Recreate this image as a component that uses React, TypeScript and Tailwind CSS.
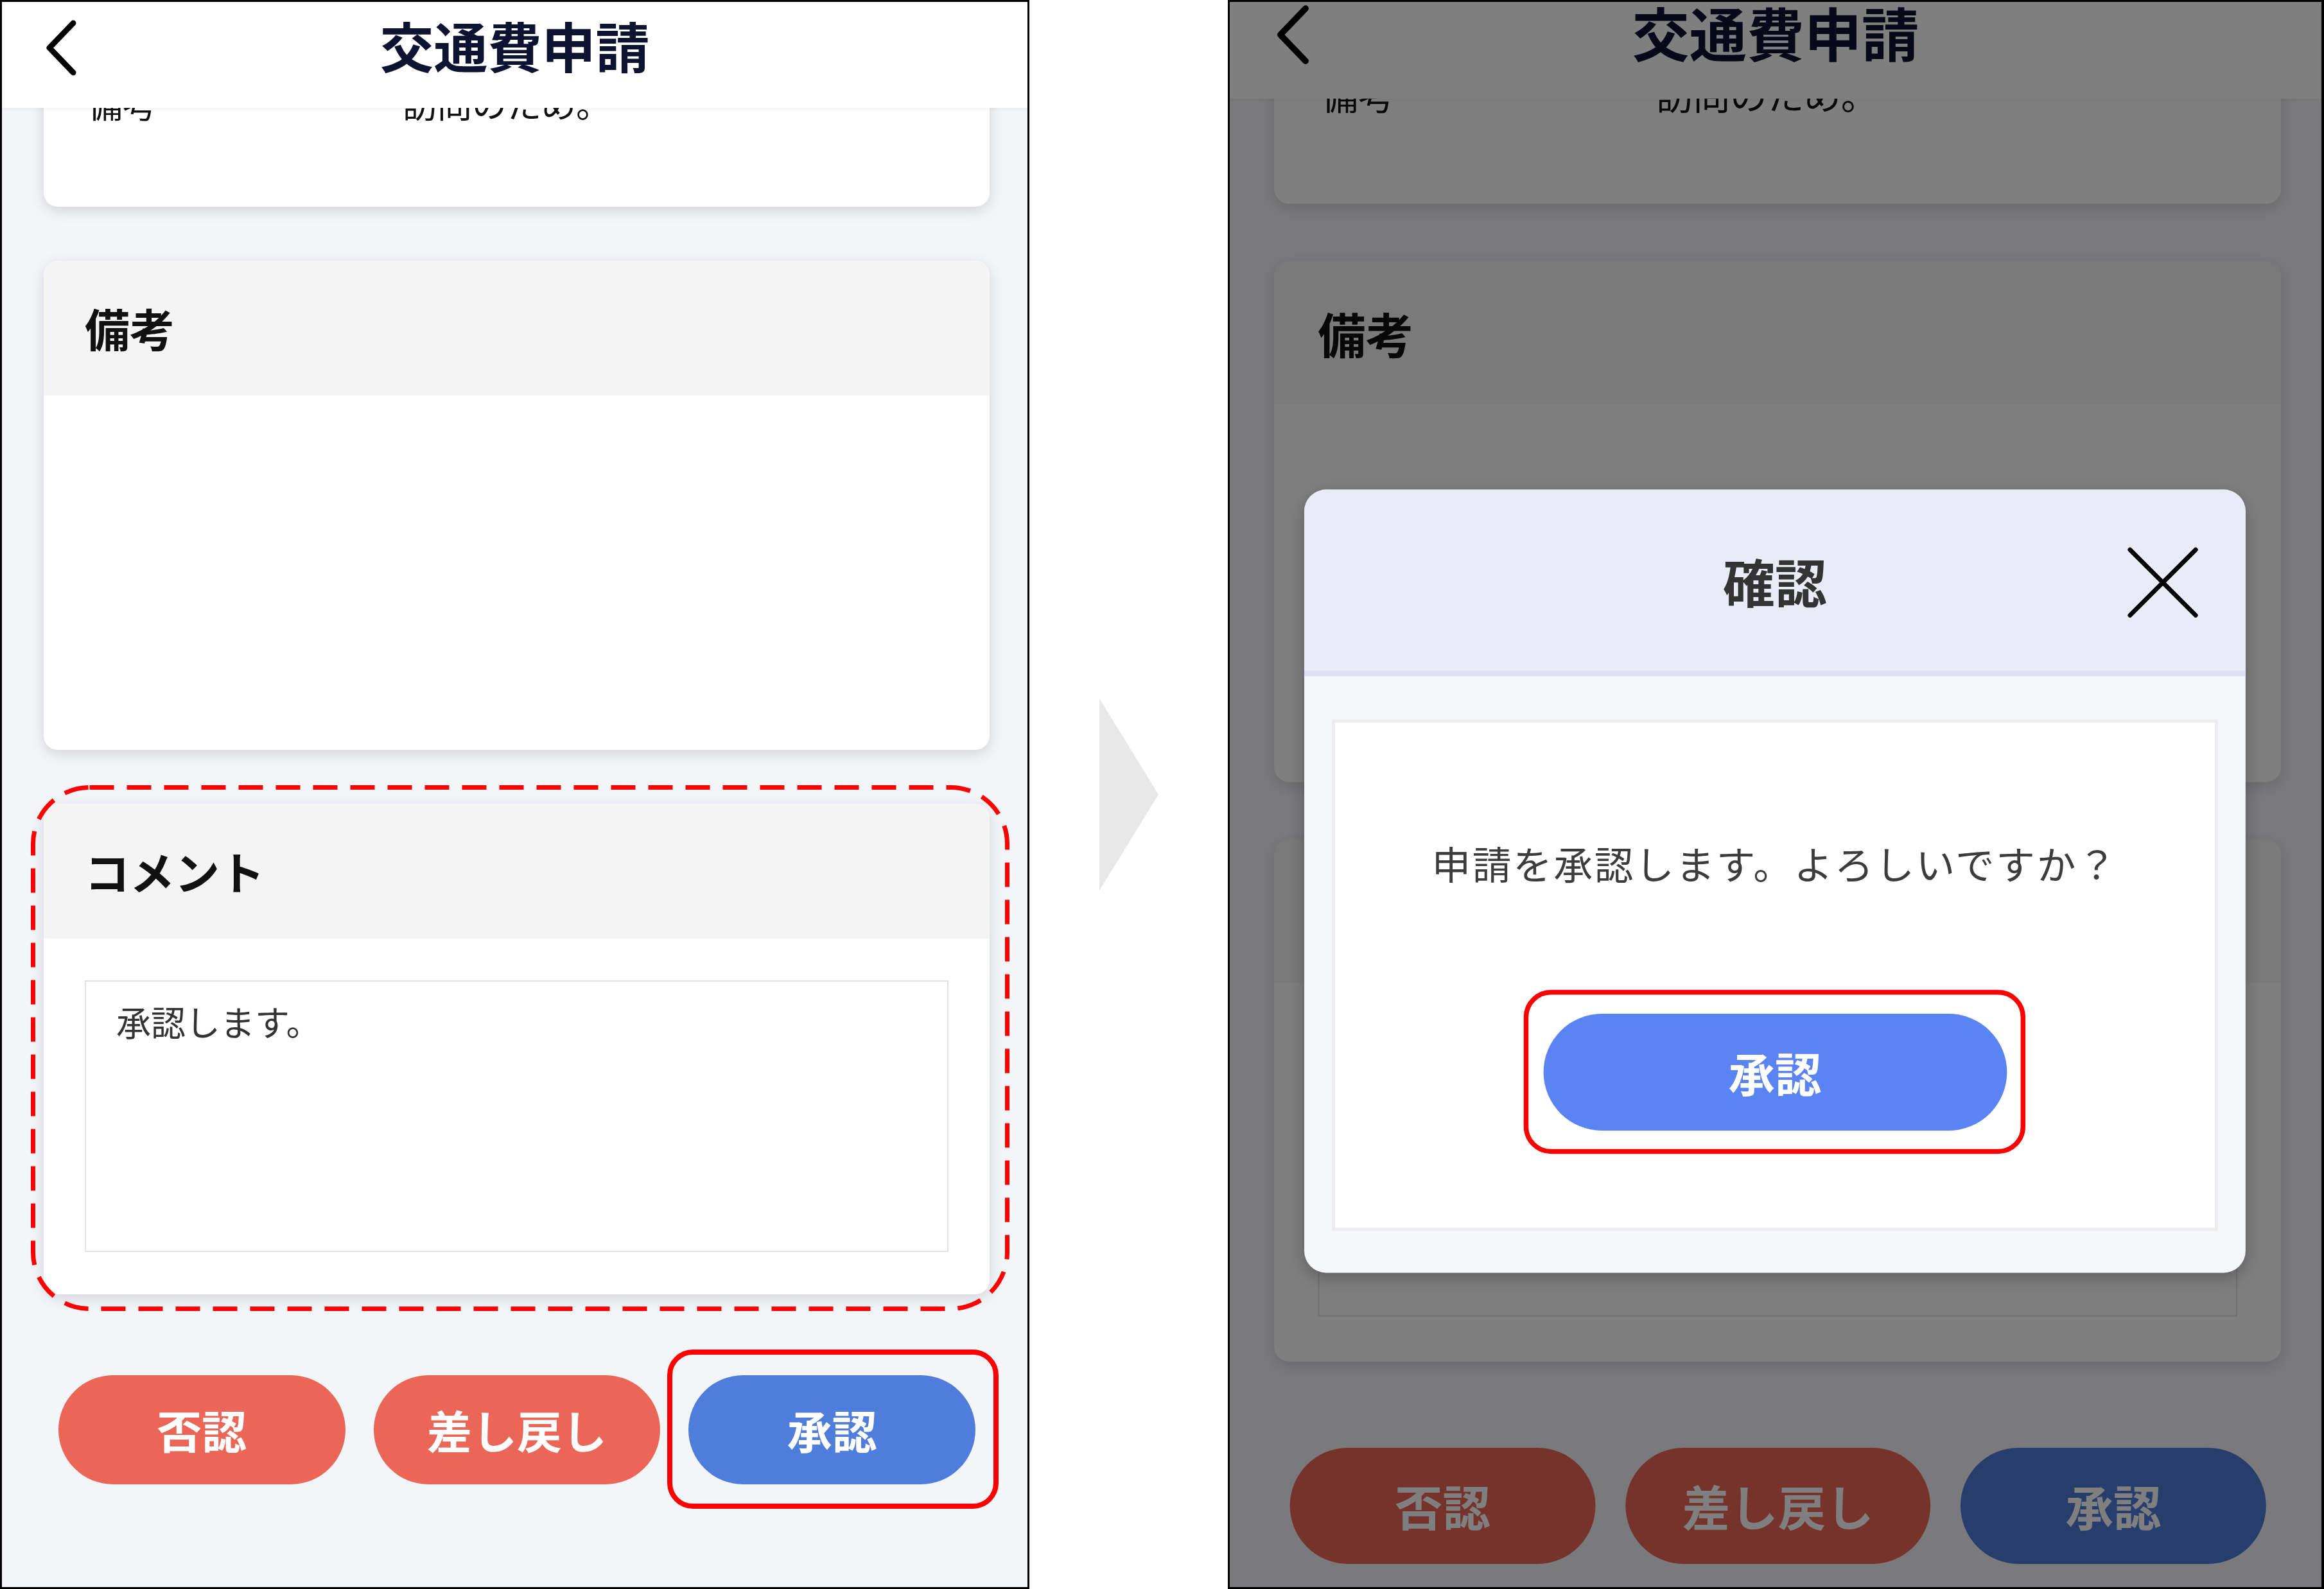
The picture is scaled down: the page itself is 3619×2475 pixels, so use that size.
import React from 'react';

const jp = "font-['Noto_Sans_CJK_JP','Noto_Sans',sans-serif]";

const BackIcon: React.FC = () => (
  <svg width="64" height="96" viewBox="0 0 64 96" className="absolute left-[60px] top-[24px]">
    <polyline points="51,9 14,47.5 51,86" fill="none" stroke="#000" strokeWidth="9" strokeLinecap="round" strokeLinejoin="round" />
  </svg>
);

const CloseIcon: React.FC = () => (
  <svg width="104" height="104" viewBox="0 0 104 104" className="absolute right-[69px] top-[84px]">
    <path d="M4 4 L100 100 M100 4 L4 100" stroke="#000" strokeWidth="6.5" strokeLinecap="round" />
  </svg>
);

const Section: React.FC<{ title: string; children: React.ReactNode }> = ({ title, children }) => (
  <div className="ml-[65px] mt-[84px] w-[1473px] overflow-hidden rounded-[22px] bg-white shadow-[0_6px_22px_rgba(0,0,0,0.14)]">
    <div className="flex h-[210px] items-center bg-[#f4f4f4] pl-[64px] text-[70px] font-bold leading-none text-[#111]">
      {title}
    </div>
    {children}
  </div>
);

// one phone screen, 1597 x 2469
const Screen: React.FC<{ confirm?: boolean }> = ({ confirm }) => (
  <div className={`relative h-[2469px] w-[1597px] overflow-hidden bg-[#f4f5f9] ${jp}`}>
    {/* Header */}
    <div className="relative z-10 flex h-[165px] justify-center bg-white pt-[25px] shadow-[0_2px_6px_rgba(0,0,0,0.05)]">
      <BackIcon />
      <h1 className="text-[84px] font-bold leading-none text-[#0e1332]">交通費申請</h1>
    </div>

    {/* Previous card, scrolled under the header */}
    <div className="-mt-[165px] ml-[65px] flex h-[319px] w-[1473px] rounded-b-[22px] bg-white pl-[69px] pt-[131px] text-[54px] leading-none text-[#111] shadow-[0_6px_22px_rgba(0,0,0,0.14)]">
      <span className="w-[490px]">備考</span>
      <span>訪問のため。</span>
    </div>

    <Section title="備考">
      <div className="h-[552px]" />
    </Section>

    <Section title="コメント">
      <div className="px-[64px] pb-[66px] pt-[65px]">
        <div className="h-[423px] border-2 border-[#e1e3ea] pl-[47px] pt-[35px] text-[54px] leading-none text-[#333]">
          承認します。
        </div>
      </div>
    </Section>

    {/* Actions */}
    <div className="ml-[88px] mt-[126px] flex w-[1428px] gap-[44px]">
      <button className="h-[170px] flex-1 rounded-full bg-[#eb6657] text-[70px] font-bold leading-none text-white">否認</button>
      <button className="h-[170px] flex-1 rounded-full bg-[#eb6657] text-[70px] font-bold leading-none text-white">差し戻し</button>
      <button className="h-[170px] flex-1 rounded-full bg-[#4f7ddb] text-[70px] font-bold leading-none text-white">承認</button>
    </div>

    {confirm ? (
      <>
        <div className="absolute inset-0 z-20 bg-black/50" />
        {/* Confirm dialog */}
        <div className="absolute left-[109px] top-[737px] z-30 flex h-[1146px] w-[1377px] flex-col overflow-hidden rounded-[32px] bg-[#f6f7fb] shadow-[0_8px_24px_rgba(0,0,0,0.25)]">
          <div className="relative flex h-[273px] shrink-0 items-center justify-center border-b-[8px] border-[#dfe1f2] bg-[#e9ebf6]">
            <h2 className="text-[76px] font-bold leading-none text-[#333]">確認</h2>
            <CloseIcon />
          </div>
          <div className="flex flex-1 px-[40px] pb-[61px] pt-[63px]">
            <div className="relative flex flex-1 flex-col items-center border-[5px] border-[#ededf0] bg-white pt-[177px]">
              <p className="text-[57px] leading-none tracking-[2.5px] text-[#3c3c3c]">申請を承認します。よろしいですか？</p>
              <button className="mt-[192px] h-[171px] w-[678px] rounded-full bg-[#5a83f4] text-[68px] font-bold leading-none text-white">承認</button>
              <div className="absolute left-[276px] top-[391px] h-[240px] w-[734px] rounded-[40px] border-[7.5px] border-[#ff0000]" />
            </div>
          </div>
        </div>
      </>
    ) : (
      <>
        <svg width="1524" height="819" viewBox="0 0 1524 819" className="absolute left-[45px] top-[1220px] z-30">
          <rect x="3.5" y="3.5" width="1517" height="812" rx="88" fill="none" stroke="#ff0000" strokeWidth="7" strokeDasharray="38 20" />
        </svg>
        <div className="absolute left-[1036px] top-[2099px] z-30 h-[248px] w-[516px] rounded-[40px] border-[8px] border-[#ff0000]" />
      </>
    )}
  </div>
);

const App: React.FC = () => {
  return (
    <div className="flex h-[2475px] w-[3619px] bg-white">
      {/* Before */}
      <div className="h-[2475px] w-[1603px] shrink-0 overflow-hidden border-[3px] border-black">
        <Screen />
      </div>

      {/* Arrow */}
      <div className="flex w-[309px] shrink-0 items-center justify-center">
        <svg width="92" height="299" viewBox="0 0 92 299">
          <polygon points="0,0 92,149.5 0,299" fill="#e8e8e8" />
        </svg>
      </div>

      {/* After: same screen with the confirm dialog, slightly larger and scrolled */}
      <div className="h-[2475px] w-[1707px] shrink-0 overflow-hidden border-[3px] border-r-[4px] border-black">
        <div className="-mt-[25px] origin-top-left scale-[1.0645]">
          <Screen confirm />
        </div>
      </div>
    </div>
  );
};

export default App;
